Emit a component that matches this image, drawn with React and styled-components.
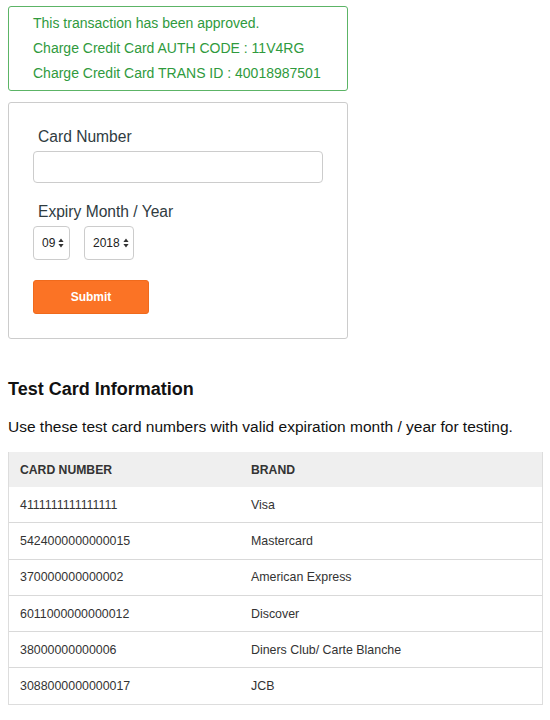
import React from 'react';
import styled, { createGlobalStyle } from 'styled-components';

const GlobalStyle = createGlobalStyle`
  body {
    margin: 0;
    background: #ffffff;
    font-family: "Liberation Sans", Arial, sans-serif;
    color: #333333;
  }
`;

const Page = styled.div`
  padding: 6px 9px 16px 8px;
`;

const Alert = styled.div`
  width: 340px;
  box-sizing: border-box;
  padding: 4px 24px;
  border: 1px solid #5cb466;
  border-radius: 3px;
  color: #2f9a3d;
  font-size: 14px;
  line-height: 25px;
`;

const FormBox = styled.form`
  width: 340px;
  box-sizing: border-box;
  margin-top: 11px;
  padding: 22px 24px 24px;
  border: 1px solid #cccccc;
  border-radius: 3px;
`;

const Label = styled.label`
  display: block;
  margin-top: ${(p) => p.top || 0}px;
  padding-left: 5px;
  font-size: 15.6px;
  line-height: 24px;
  color: #2f3b3f;
`;

const TextInput = styled.input`
  display: block;
  width: 290px;
  height: 32px;
  box-sizing: border-box;
  margin-top: 2px;
  border: 1px solid #cccccc;
  border-radius: 4px;
  outline: none;
`;

const SelectRow = styled.div`
  display: flex;
  gap: 14px;
  margin-top: 2px;
`;

const FakeSelect = styled.div`
  display: flex;
  align-items: center;
  gap: 3px;
  width: ${(p) => p.width}px;
  height: 34px;
  box-sizing: border-box;
  padding-left: 8px;
  border: 1px solid #cccccc;
  border-radius: 4px;
  font-size: 12px;
  color: #222222;
`;

const SubmitButton = styled.button`
  display: block;
  width: 116px;
  height: 34px;
  margin-top: 20px;
  border: 1px solid #f06a1c;
  border-radius: 3px;
  background: #fb7325;
  color: #ffffff;
  font-family: "Liberation Sans", Arial, sans-serif;
  font-size: 12px;
  font-weight: bold;
`;

const Heading = styled.h3`
  margin: 38px 0 0;
  font-size: 18px;
  line-height: 24px;
  font-weight: bold;
  color: #111111;
`;

const Lead = styled.p`
  margin: 14px 0 0;
  font-size: 15.5px;
  line-height: 24px;
  color: #111111;
`;

const Table = styled.div`
  margin-top: 13px;
  width: 533px;
  border: 1px solid #dddddd;
  border-top: 0;
`;

const Row = styled.div`
  display: grid;
  grid-template-columns: 231px 1fr;
  height: ${(p) => (p.head ? 35 : 35.3)}px;
  align-items: center;
  background: ${(p) => (p.head ? '#efefef' : '#ffffff')};
  border-bottom: ${(p) => (p.head ? '0' : '1px solid #d9d9d9')};
  font-size: ${(p) => (p.head ? 12.2 : 12.4)}px;
  font-weight: ${(p) => (p.head ? 'bold' : 'normal')};
  text-transform: ${(p) => (p.head ? 'uppercase' : 'none')};
  color: #333333;

  &:last-child {
    border-bottom: 0;
  }
`;

const Cell = styled.div`
  padding-left: 11px;
`;

const Arrows = () => (
  <svg width="6" height="10" viewBox="0 0 6 10">
    <path d="M3 0.5 L5.6 4 L0.4 4 Z M3 9.5 L5.6 6 L0.4 6 Z" fill="#333" />
  </svg>
);

const cards = [
  ['4111111111111111', 'Visa'],
  ['5424000000000015', 'Mastercard'],
  ['370000000000002', 'American Express'],
  ['6011000000000012', 'Discover'],
  ['38000000000006', 'Diners Club/ Carte Blanche'],
  ['3088000000000017', 'JCB'],
];

export default function App() {
  return (
    <Page>
      <GlobalStyle />
      <Alert>
        <div>This transaction has been approved.</div>
        <div>Charge Credit Card AUTH CODE : 11V4RG</div>
        <div>Charge Credit Card TRANS ID : 40018987501</div>
      </Alert>

      <FormBox onSubmit={(e) => e.preventDefault()}>
        <Label>Card Number</Label>
        <TextInput type="text" />
        <Label top={17}>Expiry Month / Year</Label>
        <SelectRow>
          <FakeSelect width={37}>09<Arrows /></FakeSelect>
          <FakeSelect width={50}>2018<Arrows /></FakeSelect>
        </SelectRow>
        <SubmitButton type="submit">Submit</SubmitButton>
      </FormBox>

      <Heading>Test Card Information</Heading>
      <Lead>Use these test card numbers with valid expiration month / year for testing.</Lead>

      <Table>
        <Row head>
          <Cell>Card Number</Cell>
          <Cell>Brand</Cell>
        </Row>
        {cards.map(([num, brand]) => (
          <Row key={num}>
            <Cell>{num}</Cell>
            <Cell>{brand}</Cell>
          </Row>
        ))}
      </Table>
    </Page>
  );
}
